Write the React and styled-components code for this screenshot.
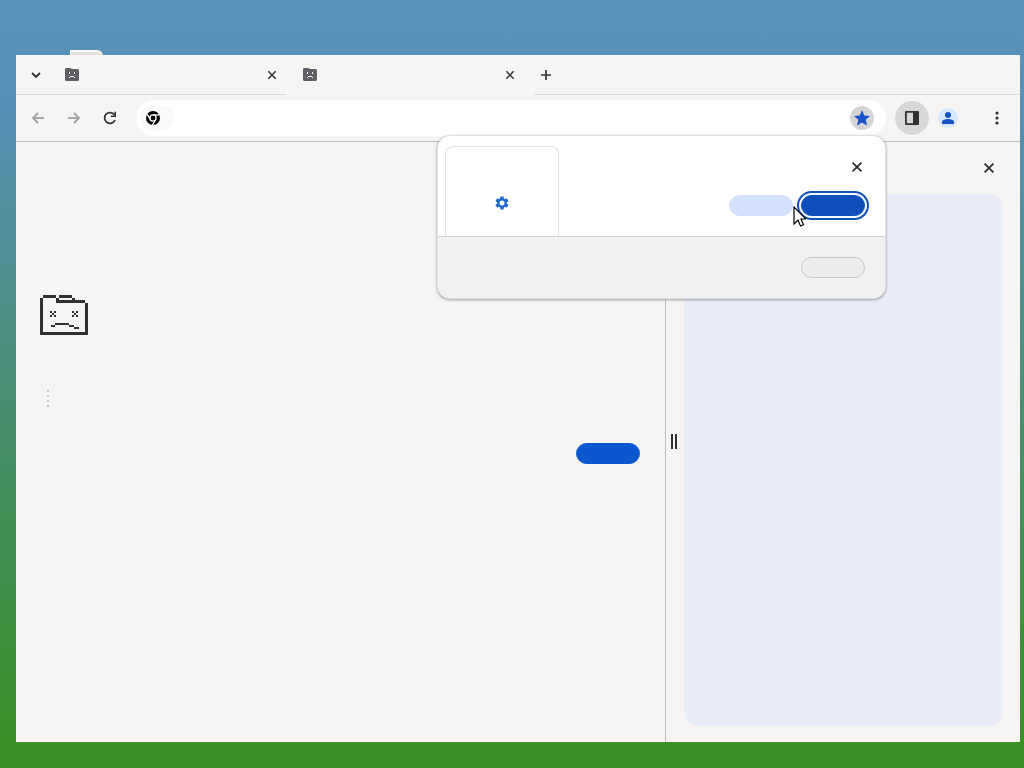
import React from 'react';
import styled, { createGlobalStyle } from 'styled-components';

const GlobalStyle = createGlobalStyle`
  * {
    box-sizing: border-box;
  }

  body {
    margin: 0;
    font-family: Roboto, 'Liberation Sans', sans-serif;
    font-size: 13px;
    color: #303133;
  }

  button {
    padding: 0;
    border: 0;
    background: none;
    color: inherit;
    font: inherit;
  }

  svg {
    display: block;
  }
`;

const Desktop = styled.div`
  position: relative;
  display: flex;
  min-height: 100vh;
  padding: 55px 4px 26px 16px;
  background: linear-gradient(
    #5992bb 0,
    #5790b6 14%,
    #518f93 34%,
    #498e6e 54%,
    #40904a 76%,
    #3b9027 97%,
    #3b9025 100%
  );
`;

const DesktopFile = styled.div`
  position: absolute;
  top: 50px;
  left: 70px;
  width: 33px;
  height: 12px;
  border-top: 2px solid #fbfbf8;
  border-left: 1px solid #fbfbf8;
  border-radius: 0 6px 0 0;
  background: #e2e1dc;
`;

const Window = styled.div`
  position: relative;
  flex: 1;
  display: flex;
  flex-direction: column;
  min-width: 0;
  background: #f6f5f4;
`;

const TabStrip = styled.header`
  display: flex;
  height: 40px;
`;

const StripCell = styled.div`
  display: flex;
  align-items: center;
  justify-content: center;
  width: 40px;
  border-bottom: 1px solid #dbdad9;
`;

const StripEnd = styled.div`
  flex: 1;
  display: flex;
  align-items: center;
  border-bottom: 1px solid #dbdad9;
`;

const Tab = styled.div`
  display: flex;
  align-items: center;
  justify-content: space-between;
  width: ${props => (props.$active ? '248px' : '230px')};
  padding: ${props => (props.$active ? '0 16px 0 17px' : '0 6px 0 9px')};
  border-bottom: 1px solid ${props => (props.$active ? '#f6f5f4' : '#dbdad9')};
`;

const IconButton = styled.button`
  display: flex;
  align-items: center;
  justify-content: center;
  width: ${props => props.$size || 16}px;
  height: ${props => props.$size || 16}px;
  border-radius: 50%;
  background: ${props => props.$fill || 'none'};
  color: ${props => props.$color || '#303133'};
`;

const Toolbar = styled.nav`
  display: flex;
  align-items: center;
  height: 47px;
  padding: 0 6px 0 10px;
  border-bottom: 1px solid #bfbebd;
`;

const NavButtons = styled.div`
  display: flex;
  gap: 12px;
  margin-right: 14px;
`;

const AddressBar = styled.div`
  flex: 1;
  display: flex;
  align-items: center;
  height: 36px;
  padding: 0 12px 0 4px;
  border-radius: 18px;
  background: #fff;
`;

const SiteChip = styled.button`
  display: flex;
  align-items: center;
  width: 34px;
  height: 26px;
  padding-left: 6px;
  border-radius: 13px;
  background: #f9f9f8;
  color: #000;
`;

const AddressInput = styled.input`
  flex: 1;
  min-width: 0;
  height: 28px;
  border: 0;
  outline: 0;
  background: none;
  font: inherit;
`;

const Actions = styled.div`
  display: flex;
  align-items: center;
  gap: 9px;
  margin-left: 9px;
`;

const MenuSlot = styled.div`
  margin-left: 22px;
`;

const Body = styled.div`
  flex: 1;
  display: flex;
`;

const CrashPage = styled.main`
  flex: 1;
  display: flex;
  flex-direction: column;
  align-items: flex-start;
  padding: 153px 25px 0 24px;
`;

const Suggestions = styled.div`
  margin-top: 54px;
  padding-left: 6px;
`;

const Pill = styled.button`
  width: 64px;
  height: 21px;
  border-radius: 11px;
  border: 1px solid ${props => props.$border || props.$fill};
  background: ${props => props.$fill};
  box-shadow: ${props =>
    props.$focused ? '0 0 0 2px #f4faff, 0 0 0 4px #1553ba' : 'none'};
`;

const ReloadPill = styled(Pill)`
  align-self: flex-end;
  margin-top: 36px;
`;

const SidePanel = styled.aside`
  display: flex;
  width: 355px;
  border-left: 1px solid #bfbebd;
`;

const ResizeHandle = styled.div`
  display: flex;
  align-items: center;
  width: 18px;
  padding-left: 5px;
`;

const PanelColumn = styled.div`
  flex: 1;
  display: flex;
  flex-direction: column;
  padding: 0 17px 16px 0;
`;

const PanelHeader = styled.div`
  display: flex;
  align-items: center;
  justify-content: flex-end;
  height: 52px;
  padding-right: 6px;
`;

const PanelContent = styled.div`
  flex: 1;
  border-radius: 14px;
  background: #eaedf8;
`;

const Bubble = styled.div`
  position: absolute;
  top: 80px;
  right: 134px;
  width: 449px;
  border: 1px solid #e0e0df;
  border-radius: 13px;
  background: #fff;
  box-shadow: 0 1px 3px rgba(0, 0, 0, 0.35);
  overflow: hidden;
`;

const BubbleMain = styled.div`
  display: flex;
  justify-content: space-between;
  height: 100px;
  padding: 10px 20px 0 7px;
`;

const Thumbnail = styled.div`
  display: flex;
  justify-content: center;
  width: 114px;
  padding-top: 49px;
  border: 1px solid #e1e1e4;
  border-bottom: 0;
  border-radius: 8px 8px 0 0;
  color: #1f6bd0;
`;

const BubbleSide = styled.div`
  display: flex;
  flex-direction: column;
  align-items: flex-end;
  padding-top: 13px;
`;

const BubbleButtons = styled.div`
  display: flex;
  gap: 8px;
  margin-top: 20px;
`;

const BubbleFooter = styled.div`
  display: flex;
  justify-content: flex-end;
  height: 62px;
  padding: 20px 20px 0;
  border-top: 1px solid #d4d4d4;
  background: #f1f1f1;
`;

const Cursor = styled.svg`
  position: absolute;
  top: 151px;
  right: 214px;
`;

const CloseIcon = ({ size = 10 }) => (
  <svg width={size} height={size} viewBox="0 0 10 10" aria-hidden="true">
    <path
      d="M1.300 1.300l7.400 7.400M8.700 1.300l-7.400 7.400"
      stroke="currentColor"
      strokeWidth="1.5"
    />
  </svg>
);

const FolderIcon = () => (
  <svg width="14" height="13" viewBox="0 0 14 13" aria-hidden="true">
    <path
      fill="#5f6063"
      d="M1 0h4l2 1h5.500q1.500 0 1.500 1.500v9q0 1.500-1.500 1.500h-11q-1.500 0-1.500-1.500v-10q0-1.500 1-1.500z"
    />
    <path
      fill="#f6f5f4"
      d="M4 4h1v2h-1zM9 4h1v2h-1zM5 8h4v1h-4zM4 9h1v1h-1zM9 9h1v1h-1z"
    />
  </svg>
);

const ArrowIcon = ({ flip }) => (
  <svg width="14" height="14" viewBox="0 0 14 14" aria-hidden="true">
    <path
      d={flip ? 'M1 7h11M7 2l5 5-5 5' : 'M13 7h-11M7 2l-5 5 5 5'}
      fill="none"
      stroke="currentColor"
      strokeWidth="1.8"
    />
  </svg>
);

const SadFolder = () => (
  <svg
    width="48"
    height="40"
    viewBox="0 0 48 40"
    shapeRendering="crispEdges"
    role="img"
    aria-label="Crashed page"
  >
    {/* outline */}
    <path
      fill="#303133"
      d="M3 0h13v3h-13zM19 0h13v3h-13zM0 3h3v37h-3zM16 3h3v5h-3zM32 3h3v2h-3zM19 5h26v3h-26zM45 8h3v32h-3zM3 37h42v3h-42z"
    />
    {/* eyes */}
    <path
      fill="#303133"
      d="M10 16h2v2h-2zM14 16h2v2h-2zM12 18h2v2h-2zM10 20h2v2h-2zM14 20h2v2h-2z
        M32 16h2v2h-2zM36 16h2v2h-2zM34 18h2v2h-2zM32 20h2v2h-2zM36 20h2v2h-2z"
    />
    {/* mouth */}
    <path
      fill="#303133"
      d="M15 28h14v2h-14zM11 30h4v2h-4zM29 30h5v2h-5zM34 32h5v2h-5z"
    />
  </svg>
);

const App = () => {
  return (
    <>
      <GlobalStyle />
      <Desktop>
        <DesktopFile />
        <Window>
          <TabStrip>
            <StripCell>
              <IconButton aria-label="Search tabs">
                <svg width="10" height="6" viewBox="0 0 10 6">
                  <path
                    d="M1 1l4 4 4-4"
                    fill="none"
                    stroke="currentColor"
                    strokeWidth="1.8"
                  />
                </svg>
              </IconButton>
            </StripCell>
            <Tab>
              <FolderIcon />
              <IconButton aria-label="Close tab">
                <CloseIcon />
              </IconButton>
            </Tab>
            <Tab $active>
              <FolderIcon />
              <IconButton aria-label="Close tab">
                <CloseIcon />
              </IconButton>
            </Tab>
            <StripEnd>
              <IconButton $size={24} aria-label="New tab">
                <svg width="12" height="12" viewBox="0 0 12 12">
                  <path
                    d="M6 1v10M1 6h10"
                    stroke="currentColor"
                    strokeWidth="1.7"
                  />
                </svg>
              </IconButton>
            </StripEnd>
          </TabStrip>

          <Toolbar>
            <NavButtons>
              <IconButton $size={24} $color="#a5a5a5" aria-label="Back">
                <ArrowIcon />
              </IconButton>
              <IconButton $size={24} $color="#a5a5a5" aria-label="Forward">
                <ArrowIcon flip />
              </IconButton>
              <IconButton $size={24} aria-label="Reload">
                <svg width="14" height="14" viewBox="0 0 14 14">
                  <path
                    d="M12 9a5.400 5.400 0 1 1-.6-5.200"
                    fill="none"
                    stroke="currentColor"
                    strokeWidth="1.7"
                  />
                  <path
                    d="M13 .8v5.200h-5.200v-1.600h3.600v-3.600z"
                    fill="currentColor"
                  />
                </svg>
              </IconButton>
            </NavButtons>
            <AddressBar>
              <SiteChip aria-label="Site information">
                <svg width="14" height="14" viewBox="0 0 14 14">
                  <circle cx="7" cy="7" r="7" fill="currentColor" />
                  <circle
                    cx="7"
                    cy="7"
                    r="3.100"
                    fill="currentColor"
                    stroke="#fff"
                    strokeWidth="1.300"
                  />
                  <path
                    d="M7 3.900h6.300M4.300 8.500l-3.100-5.400M9.700 8.500l-3.200 5.500"
                    stroke="#fff"
                    strokeWidth="1.300"
                  />
                </svg>
              </SiteChip>
              <AddressInput aria-label="Address" />
              <IconButton
                $size={24}
                $fill="#d5d5d4"
                $color="#1553c8"
                aria-label="Bookmark this tab"
              >
                <svg width="16" height="16" viewBox="0 0 16 16">
                  <path
                    fill="currentColor"
                    d="M8 0l2.300 5.400 5.700.5-4.300 3.800 1.300 5.800-5-3.100-5 3.100 1.300-5.800-4.300-3.800 5.700-.5z"
                  />
                </svg>
              </IconButton>
            </AddressBar>
            <Actions>
              <IconButton $size={34} $fill="#d7d7d5" aria-label="Side panel">
                <svg width="14" height="14" viewBox="0 0 14 14">
                  <path
                    fill="currentColor"
                    fillRule="evenodd"
                    d="M1 0h12q1 0 1 1v12q0 1-1 1h-12q-1 0-1-1v-12q0-1 1-1zM1.800 1.800v10.400h6.200v-10.400z"
                  />
                </svg>
              </IconButton>
              <IconButton
                $size={20}
                $fill="#d9e7fc"
                $color="#1553c8"
                aria-label="Profile"
              >
                <svg width="12" height="12" viewBox="0 0 12 12">
                  <circle cx="6" cy="3" r="3" fill="currentColor" />
                  <path
                    fill="currentColor"
                    d="M0 12v-2c0-2 3-3 6-3s6 1 6 3v2z"
                  />
                </svg>
              </IconButton>
            </Actions>
            <MenuSlot>
              <IconButton $size={34} aria-label="Menu">
                <svg width="4" height="14" viewBox="0 0 4 14">
                  <circle cx="2" cy="2" r="1.600" fill="currentColor" />
                  <circle cx="2" cy="7" r="1.600" fill="currentColor" />
                  <circle cx="2" cy="12" r="1.600" fill="currentColor" />
                </svg>
              </IconButton>
            </MenuSlot>
          </Toolbar>

          <Body>
            <CrashPage>
              <SadFolder />
              <Suggestions>
                <svg width="4" height="18" viewBox="0 0 4 18" fill="#b9b9b8">
                  <circle cx="2" cy="2" r="1" />
                  <circle cx="2" cy="7" r="1" />
                  <circle cx="2" cy="12" r="1" />
                  <circle cx="2" cy="17" r="1" />
                </svg>
              </Suggestions>
              <ReloadPill $fill="#0b57d0" aria-label="Reload page" />
            </CrashPage>
            <SidePanel>
              <ResizeHandle>
                <svg width="7" height="16" viewBox="0 0 7 16">
                  <path fill="#303133" d="M0 0h2v15h-2zM4 0h2v15h-2z" />
                </svg>
              </ResizeHandle>
              <PanelColumn>
                <PanelHeader>
                  <IconButton aria-label="Close side panel">
                    <CloseIcon size={12} />
                  </IconButton>
                </PanelHeader>
                <PanelContent />
              </PanelColumn>
            </SidePanel>
          </Body>

          <Bubble role="dialog" aria-label="Bookmark added">
            <BubbleMain>
              <Thumbnail>
                <svg width="14" height="14" viewBox="0 0 14 14">
                  <g stroke="currentColor" strokeWidth="3.400">
                    <path d="M7 .4v13.200M1.300 3.700l11.400 6.600M12.700 3.700l-11.400 6.600" />
                  </g>
                  <circle cx="7" cy="7" r="5" fill="currentColor" />
                  <circle cx="7" cy="7" r="2.500" fill="#fff" />
                </svg>
              </Thumbnail>
              <BubbleSide>
                <IconButton aria-label="Close">
                  <CloseIcon size={12} />
                </IconButton>
                <BubbleButtons>
                  <Pill $fill="#d3e1fc" aria-label="Remove" />
                  <Pill $fill="#0f4fba" $focused aria-label="Done" />
                </BubbleButtons>
              </BubbleSide>
            </BubbleMain>
            <BubbleFooter>
              <Pill $fill="#eeedeb" $border="#c9c8c6" aria-label="Options" />
            </BubbleFooter>
          </Bubble>

          <Cursor width="13" height="21" viewBox="0 0 13 21" aria-hidden="true">
            <path
              d="M1 1v17l4-4 2.500 6 3-1.300-2.500-5.700h5z"
              fill="#fff"
              stroke="#000"
              strokeWidth="1.200"
            />
          </Cursor>
        </Window>
      </Desktop>
    </>
  );
};

export default App;
